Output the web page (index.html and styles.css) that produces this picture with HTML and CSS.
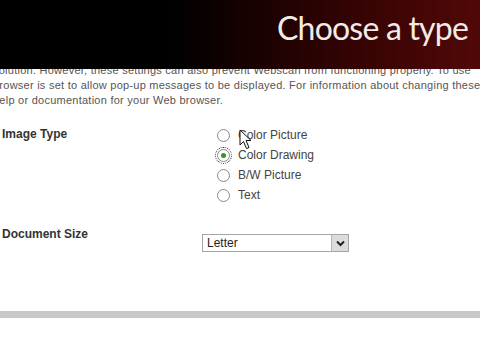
FILE: index.html
```html
<!DOCTYPE html>
<html lang="en">
<head>
    <meta charset="UTF-8">
    <title>Choose a type</title>
    <link rel="stylesheet" href="styles.css">
</head>
<body>

    <div class="banner">
        <h1>Choose a type</h1>
    </div>

    <p class="intro">solution. However, these settings can also prevent Webscan from functioning properly. To use<br>
    browser is set to allow pop-up messages to be displayed. For information about changing these<br>
    help or documentation for your Web browser.</p>

    <div class="form-row">
        <div class="label">Image Type</div>
        <div class="choices">
            <div class="choice"><span class="radio"></span>Color Picture</div>
            <div class="choice"><span class="radio checked"></span>Color Drawing</div>
            <div class="choice"><span class="radio"></span>B/W Picture</div>
            <div class="choice"><span class="radio"></span>Text</div>
            <svg class="cursor" width="14" height="22" viewBox="0 0 14 22">
                <path d="M1 1 L1 16 L4.5 12.5 L7.5 19.5 L10 18.5 L7 11.5 L12 11.5 Z" fill="#fff" stroke="#111" stroke-width="1"/>
            </svg>
        </div>
    </div>

    <div class="form-row doc">
        <div class="label">Document Size</div>
        <div class="select">
            <span>Letter</span>
            <span class="select-btn">
                <svg width="9" height="7" viewBox="0 0 9 7"><path d="M1 1.5 L4.5 5 L8 1.5" fill="none" stroke="#222" stroke-width="2"/></svg>
            </span>
        </div>
    </div>

    <div class="divider"></div>

</body>
</html>
```

FILE: styles.css
```css
body { margin: 0; background: #fff; font-family: "Liberation Sans", Arial, sans-serif; overflow: hidden; }
.banner { position: relative; z-index: 1; height: 69px; background: linear-gradient(to right, #000 36%, #1c0101 55%, #3a0404 78%, #520808 100%); display: flex; justify-content: flex-end; }
.banner h1 { margin: 0; padding: 6px 12px 0 0; font-family: Lato, "Open Sans", sans-serif; font-weight: 400; font-size: 32px; letter-spacing: -0.8px; color: #f1ece8; line-height: 44px; }
.intro { margin: -6px 0 0 -7px; font-size: 11px; line-height: 15px; color: #555; white-space: nowrap; letter-spacing: 0.25px; }
.form-row { display: grid; grid-template-columns: 215px auto; margin: 17px 0 0 2px; position: relative; }
.label { font-size: 12px; font-weight: bold; color: #333; line-height: 16px; margin-top: 1px; }
.choices { position: relative; }
.choice { display: flex; align-items: center; height: 20px; font-size: 12px; color: #444; }
.radio { width: 11px; height: 11px; border: 1px solid #8a8a8a; border-radius: 50%; margin-right: 8px; background: #fff; position: relative; }
.radio.checked { outline: 1px dotted #333; outline-offset: 1px; }
.radio.checked::after { content: ""; position: absolute; left: 3px; top: 3px; width: 5px; height: 5px; border-radius: 50%; background: #2a9a2a; }
.cursor { position: absolute; left: 22px; top: 4px; }
.doc { margin-top: 20px; grid-template-columns: 200px auto; }
.doc .label { margin-top: 1px; }
.select { margin-top: 9px; width: 145px; height: 16px; border: 1px solid #a5a5a5; display: flex; align-items: center; justify-content: space-between; font-size: 12px; color: #222; }
.select span:first-child { padding-left: 4px; }
.select-btn { width: 17px; height: 16px; background: #dcdcdc; border-left: 1px solid #b5b5b5; box-sizing: border-box; display: flex; align-items: center; justify-content: center; }
.divider { margin-top: 59px; height: 7px; background: #c8c8c8; }
```
